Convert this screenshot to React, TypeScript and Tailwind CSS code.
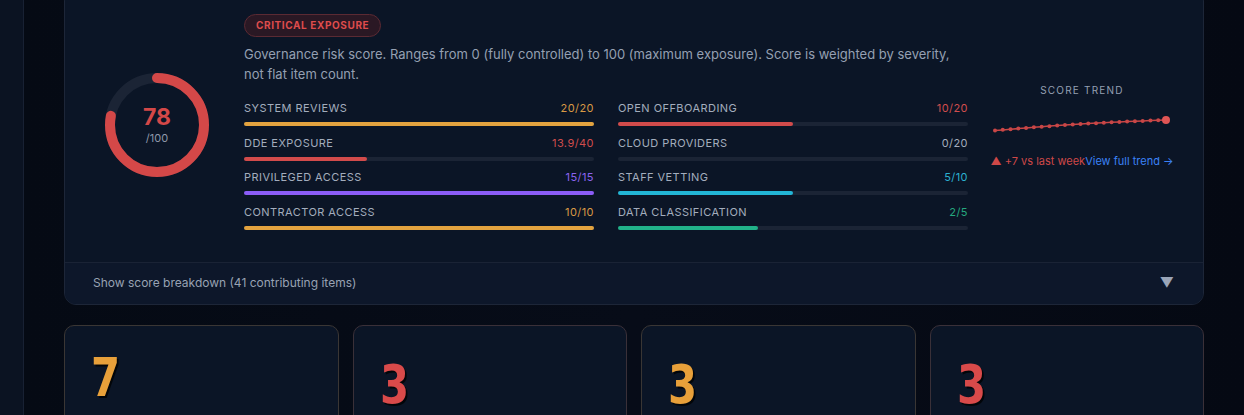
import React from "react";

type Metric = {
  label: string;
  value: string;
  pct: number;
  bar: string;
  text: string;
};

const left: Metric[] = [
  { label: "System Reviews", value: "20/20", pct: 100, bar: "bg-[#e3a33f]", text: "text-[#d99a45]" },
  { label: "DDE Exposure", value: "13.9/40", pct: 35, bar: "bg-[#d24b4b]", text: "text-[#d04d4d]" },
  { label: "Privileged Access", value: "15/15", pct: 100, bar: "bg-[#8b5cf6]", text: "text-[#8b63f0]" },
  { label: "Contractor Access", value: "10/10", pct: 100, bar: "bg-[#e3a33f]", text: "text-[#d99a45]" },
];

const right: Metric[] = [
  { label: "Open Offboarding", value: "10/20", pct: 50, bar: "bg-[#d24b4b]", text: "text-[#d04d4d]" },
  { label: "Cloud Providers", value: "0/20", pct: 0, bar: "bg-[#d24b4b]", text: "text-[#a3adbd]" },
  { label: "Staff Vetting", value: "5/10", pct: 50, bar: "bg-[#22b5d6]", text: "text-[#2bb0d0]" },
  { label: "Data Classification", value: "2/5", pct: 40, bar: "bg-[#21b289]", text: "text-[#25a87f]" },
];

function MetricRow({ m }: { m: Metric }) {
  return (
    <div className="flex flex-col">
      <div className="flex items-center justify-between text-[11px] leading-[14px] tracking-[0.04em]">
        <span className="uppercase text-[#a3adbd]">{m.label}</span>
        <span className={m.text}>{m.value}</span>
      </div>
      <div className="mt-[7px] h-[4px] w-full rounded-full bg-[#1b2435]">
        <div className={`h-full rounded-full ${m.bar}`} style={{ width: `${m.pct}%` }} />
      </div>
    </div>
  );
}

function Donut() {
  const r = 47;
  const c = 2 * Math.PI * r;
  const filled = c * 0.78;
  return (
    <div className="relative mt-[6px] h-[104px] w-[104px] shrink-0">
      <svg width="104" height="104" viewBox="0 0 104 104" className="-rotate-90">
        <circle cx="52" cy="52" r={r} fill="none" stroke="#1b2435" strokeWidth="10" />
        <circle
          cx="52"
          cy="52"
          r={r}
          fill="none"
          stroke="#d44848"
          strokeWidth="10"
          strokeLinecap="round"
          strokeDasharray={`${filled} ${c}`}
        />
      </svg>
      <div className="absolute inset-0 flex flex-col items-center justify-center">
        <span className="text-[23px] font-bold leading-[24px] text-[#d44848]">78</span>
        <span className="mt-[3px] text-[11px] leading-[13px] text-[#8e98aa]">/100</span>
      </div>
    </div>
  );
}

function Sparkline() {
  const n = 23;
  const pts = Array.from({ length: n }, (_, i) => {
    const t = i / (n - 1);
    const x = 3 + t * 171;
    const y = 15.5 - t * 10.5 - Math.sin(t * Math.PI) * 1.2;
    return [x, y] as const;
  });
  const d = pts.map(([x, y], i) => `${i ? "L" : "M"}${x.toFixed(1)} ${y.toFixed(1)}`).join(" ");
  return (
    <svg width="180" height="20" viewBox="0 0 180 20">
      <path d={d} fill="none" stroke="#c94646" strokeWidth="1.5" />
      {pts.slice(0, -1).map(([x, y], i) => (
        <circle key={i} cx={x} cy={y} r="2" fill="#c94646" />
      ))}
      <circle cx={pts[n - 1][0]} cy={pts[n - 1][1]} r="4" fill="#e05555" />
    </svg>
  );
}

function StatCard({ value, color, border, pad }: { value: string; color: string; border: string; pad: string }) {
  return (
    <div className={`h-[120px] rounded-[10px] border bg-[#0b1526] px-[26px] ${border} ${pad}`}>
      <div
        className={`inline-block origin-left scale-x-[0.86] text-[54px] font-bold leading-[44px] ${color} [text-shadow:2px_2px_0_rgba(0,0,0,0.75)]`}
        style={{ fontFamily: '"DejaVu Sans Condensed", "DejaVu Sans", "Liberation Sans", sans-serif' }}
      >
        {value}
      </div>
    </div>
  );
}

export default function App() {
  return (
    <div
      className="flex h-[415px] w-[1244px] overflow-hidden bg-[#070c17]"
      style={{ fontFamily: 'Inter, "Noto Sans", "Liberation Sans", sans-serif' }}
    >
      <div className="w-[24px] shrink-0 border-r border-[#182133] bg-[#0b1322]" />
      <main className="flex-1 bg-gradient-to-r from-[#050a14] via-[#070c18] to-[#050913] pl-[40px] pr-[40px]">
        <section className="-mt-[11px] overflow-hidden rounded-[12px] border border-[#1d2638] bg-[#0b1526]">
          <div className="flex items-center pl-[40px] pr-[25px] pb-[32px] pt-[24px]">
            <Donut />
            <div className="ml-[35px] flex w-[724px] shrink-0 flex-col">
              <span className="self-start rounded-full border border-[#5b2a33] bg-[#2a1824] px-[11px] py-[4px] text-[10px] font-bold uppercase leading-[13px] tracking-[0.06em] text-[#de4c4c]">
                Critical Exposure
              </span>
              <p className="mt-[7px] text-[13px] leading-[20px] text-[#95a0b2]">
                Governance risk score. Ranges from 0 (fully controlled) to 100 (maximum exposure). Score is weighted by severity, not flat item count.
              </p>
              <div className="mt-[17px] grid grid-cols-2 gap-x-[24px] gap-y-[9.5px]">
                {left.map((m, i) => (
                  <React.Fragment key={m.label}>
                    <MetricRow m={m} />
                    <MetricRow m={right[i]} />
                  </React.Fragment>
                ))}
              </div>
            </div>
            <div className="ml-[19px] mt-[8px] flex w-[190px] shrink-0 flex-col items-center">
              <span className="text-[10px] uppercase leading-[13px] tracking-[0.12em] text-[#95a0b2]">Score Trend</span>
              <div className="mt-[18px]">
                <Sparkline />
              </div>
              <div className="mt-[19px] flex items-center whitespace-nowrap text-[11px] leading-[14px]">
                <span className="text-[#cf4848]">▲ +7 vs last week</span>
                <span className="text-[#3b82f6]">View full trend →</span>
              </div>
            </div>
          </div>
          <button className="flex h-[42px] w-full items-center justify-between border-t border-[#1a2335] bg-[#0d172a] pl-[28px] pr-[29px] text-left">
            <span className="text-[12px] text-[#98a2b3]">Show score breakdown (41 contributing items)</span>
            <span className="text-[14px] leading-none text-[#9aa5b8]">▼</span>
          </button>
        </section>
        <div className="mt-[20px] grid grid-cols-4 gap-[14px]">
          <StatCard value="7" color="text-[#e8a03a]" border="border-[#3a3634]" pad="pt-[30px]" />
          <StatCard value="3" color="text-[#d94a4a]" border="border-[#3a3038]" pad="pt-[37px]" />
          <StatCard value="3" color="text-[#e8a03a]" border="border-[#3a3634]" pad="pt-[37px]" />
          <StatCard value="3" color="text-[#d94a4a]" border="border-[#3a3038]" pad="pt-[37px]" />
        </div>
      </main>
    </div>
  );
}
